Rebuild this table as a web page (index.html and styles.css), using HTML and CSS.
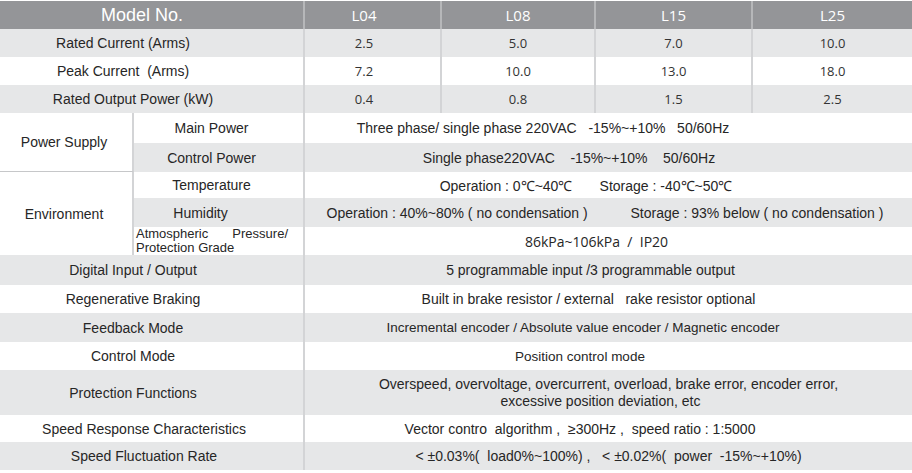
FILE: index.html
```html
<!DOCTYPE html>
<html>
<head>
<meta charset="utf-8">
<link rel="stylesheet" href="styles.css">
</head>
<body>
<div class="spec">
  <div class="c hd hd-model sep span2">Model No.</div>
  <div class="c hd num sep col-first">L04</div>
  <div class="c hd num sep">L08</div>
  <div class="c hd num sep">L15</div>
  <div class="c hd num">L25</div>

  <div class="c g lbl sep span2 l-far">Rated Current (Arms)</div>
  <div class="c g num sep col-first">2.5</div>
  <div class="c g num sep">5.0</div>
  <div class="c g num sep">7.0</div>
  <div class="c g num">10.0</div>

  <div class="c lbl sep span2 l-far">Peak Current&nbsp; (Arms)</div>
  <div class="c num sep col-first">7.2</div>
  <div class="c num sep">10.0</div>
  <div class="c num sep">13.0</div>
  <div class="c num">18.0</div>

  <div class="c g lbl sep span2">Rated Output Power (kW)</div>
  <div class="c g num sep col-first">0.4</div>
  <div class="c g num sep">0.8</div>
  <div class="c g num sep">1.5</div>
  <div class="c g num">2.5</div>

  <div class="c lbl grp grp-line sep rows2">Power Supply</div>
  <div class="c lbl sub sep">Main Power</div>
  <div class="c val span4 v-main">Three phase/ single phase 220VAC   -15%~+10%   50/60Hz</div>

  <div class="c g lbl sub sep">Control Power</div>
  <div class="c g val span4 v-ctrl">Single phase220VAC    -15%~+10%    50/60Hz</div>

  <div class="c lbl grp sep rows3">Environment</div>
  <div class="c lbl sub sep">Temperature</div>
  <div class="c val span4 v-temp">Operation : 0℃~40℃       Storage : -40℃~50℃</div>

  <div class="c g lbl sub sub-hum sep">Humidity</div>
  <div class="c g val span4 v-hum">Operation : 40%~80% ( no condensation )           Storage : 93% below ( no condensation )</div>

  <div class="c sub-2 sep"><span class="just">Atmospheric Pressure/ Protection Grade</span></div>
  <div class="c val num-font span4 v-atm">86kPa~106kPa  /  IP20</div>

  <div class="c g lbl sep span2">Digital Input / Output</div>
  <div class="c g val span4">5 programmable input /3 programmable output</div>

  <div class="c lbl sep span2">Regenerative Braking</div>
  <div class="c val span4 v-built">Built in brake resistor / external   rake resistor optional</div>

  <div class="c g lbl sep span2">Feedback Mode</div>
  <div class="c g val small span4 v-fb">Incremental encoder / Absolute value encoder / Magnetic encoder</div>

  <div class="c lbl sep span2">Control Mode</div>
  <div class="c val small span4 v-pos">Position control mode</div>

  <div class="c g lbl sep span2">Protection Functions</div>
  <div class="c g val span4 v-wide two">
    <span>Overspeed, overvoltage, overcurrent, overload, brake error, encoder error,</span>
    <span class="second">excessive position deviation, etc</span>
  </div>

  <div class="c lbl sep span2 l-near">Speed Response Characteristics</div>
  <div class="c val span4 v-pos">Vector contro  algorithm ,  ≥300Hz ,  speed ratio : 1:5000</div>

  <div class="c g lbl sep span2 l-near">Speed Fluctuation Rate</div>
  <div class="c g val span4 v-wide">&lt; ±0.03%(  load0%~100%) ,   &lt; ±0.02%(  power  -15%~+10%)</div>
</div>
</body>
</html>
```
FILE: styles.css
```css
html, body {
  margin: 0;
  padding: 0;
  background: #ffffff;
}

body {
  font-family: "Liberation Sans", Arial, sans-serif;
  color: #262626;
}

.spec {
  margin-top: 1px;
  width: 912px;
  display: grid;
  grid-template-columns: 134px 171px 137px 154px 157px 159px;
  grid-template-rows: 28px 28px 28px 28px 30px 29px 26px 29px 28px 30px 28px 29px 28px 45px 27px 28px;
}

.c {
  box-sizing: border-box;
  display: flex;
  align-items: center;
  justify-content: center;
  text-align: center;
  white-space: pre;
  overflow: hidden;
}

.sep {
  border-right: 2px solid #d3d4d6;
}

.span2 { grid-column: span 2; }
.span4 { grid-column: span 4; }
.rows2 { grid-row: span 2; }
.rows3 { grid-row: span 3; }

.hd {
  background: #949598;
  color: #ffffff;
}

.hd.sep {
  border-right-color: #b6b7b9;
}

.hd-model {
  font-size: 18px;
  padding-right: 19px;
}

.g {
  background: #e6e7e8;
}

.lbl {
  font-size: 14px;
}

.span2.lbl {
  padding-right: 37px;
}

.span2.lbl.l-far {
  padding-right: 57px;
}

.span2.lbl.l-near {
  padding-right: 15px;
}

.num {
  font-family: "Open Sans", "Noto Sans", sans-serif;
  font-size: 13px;
  color: #333333;
}

.hd.num {
  color: #ffffff;
  font-size: 15px;
}

.col-first {
  padding-right: 17px;
}

.grp {
  padding-right: 4px;
}

.grp-line {
  border-bottom: 1px solid #c6c7c9;
}

.sub {
  padding-right: 14px;
}

.sub-hum {
  padding-right: 36px;
}

.sub-2 {
  justify-content: flex-start;
  padding-left: 2px;
  white-space: normal;
  font-size: 13px;
  line-height: 14px;
}

.just {
  display: block;
  width: 152px;
  text-align: justify;
}

.val {
  font-size: 14px;
  padding-right: 36px;
}

.val.small {
  font-size: 13.5px;
}

.num-font {
  font-family: "Open Sans", "Noto Sans", sans-serif;
  font-size: 14px;
}

.v-main { padding-right: 131px; }
.v-ctrl { padding-right: 79px; }
.v-temp { padding-right: 45px; }
.v-hum { padding-right: 7px; }
.v-atm { padding-right: 24px; }
.v-built { padding-right: 40px; }
.v-fb { padding-right: 51px; }
.v-pos { padding-right: 57px; }
.v-wide { padding-right: 0; }

.two {
  flex-direction: column;
  line-height: 17px;
}

.second {
  padding-right: 16px;
}
```
